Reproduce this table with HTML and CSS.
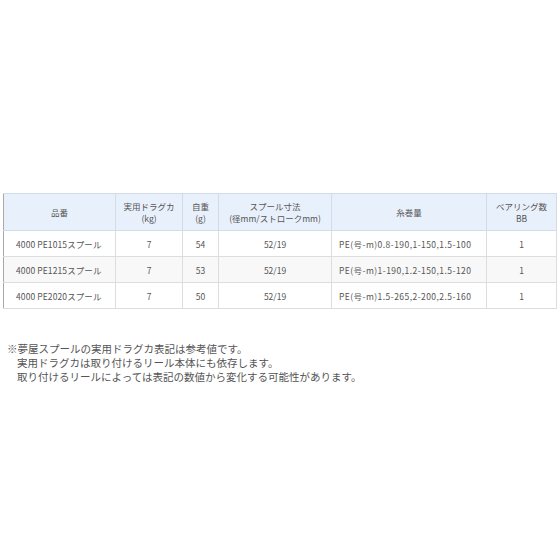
FILE: index.html
```html
<!DOCTYPE html>
<html lang="ja">
<head>
<meta charset="utf-8">
<link rel="stylesheet" href="styles.css">
</head>
<body>
<div class="page">
  <table class="spec">
    <colgroup>
      <col class="c1"><col class="c2"><col class="c3"><col class="c4"><col class="c5"><col class="c6">
    </colgroup>
    <thead>
      <tr>
        <th>品番</th>
        <th>実用ドラグカ<br>(kg)</th>
        <th>自重<br>(g)</th>
        <th>スプール寸法<br>(径mm/ストロークmm)</th>
        <th>糸巻量</th>
        <th>ベアリング数<br>BB</th>
      </tr>
    </thead>
    <tbody>
      <tr>
        <td class="left">4000 PE1015スプール</td>
        <td>7</td>
        <td>54</td>
        <td>52/19</td>
        <td class="line">PE(号-m)0.8-190,1-150,1.5-100</td>
        <td>1</td>
      </tr>
      <tr class="alt">
        <td class="left">4000 PE1215スプール</td>
        <td>7</td>
        <td>53</td>
        <td>52/19</td>
        <td class="line">PE(号-m)1-190,1.2-150,1.5-120</td>
        <td>1</td>
      </tr>
      <tr>
        <td class="left">4000 PE2020スプール</td>
        <td>7</td>
        <td>50</td>
        <td>52/19</td>
        <td class="line">PE(号-m)1.5-265,2-200,2.5-160</td>
        <td>1</td>
      </tr>
    </tbody>
  </table>
  <div class="note">
    <p>※夢屋スプールの実用ドラグカ表記は参考値です。</p>
    <p class="indent">実用ドラグカは取り付けるリール本体にも依存します。</p>
    <p class="indent">取り付けるリールによっては表記の数値から変化する可能性があります。</p>
  </div>
</div>
</body>
</html>
```

FILE: styles.css
```css
html, body {
  margin: 0;
  padding: 0;
  background: #ffffff;
}
.page {
  width: 560px;
  height: 560px;
  padding-top: 193px;
  box-sizing: border-box;
  font-family: "Noto Sans CJK JP", "Noto Sans", sans-serif;
  color: #555555;
}
.spec {
  margin-left: 3px;
  width: 553px;
  border-collapse: collapse;
  table-layout: fixed;
  font-size: 8.5px;
}
.c1 { width: 112px; }
.c2 { width: 67px; }
.c3 { width: 36px; }
.c4 { width: 113px; }
.c5 { width: 155px; }
.c6 { width: 70px; }
.spec th, .spec td {
  border: 1px solid #dddddd;
  text-align: center;
  padding: 0;
  font-weight: normal;
}
.spec th {
  background: #e8f0fb;
  border-color: #d3dbe6;
  height: 36px;
  line-height: 12px;
}
.spec td {
  height: 25px;
  line-height: 12px;
}
.spec tr > :first-child {
  border-left: 1px solid #a9a9a9;
}
.spec td.left {
  text-align: left;
  padding-left: 12px;
  letter-spacing: 0.1px;
}
.spec td.line {
  text-align: left;
  padding-left: 7px;
  letter-spacing: 0.45px;
}
.spec tr.alt td {
  background: #f8f8f8;
}
.note {
  margin-top: 33px;
  padding-left: 7px;
  font-size: 10.5px;
  line-height: 14px;
  color: #555555;
}
.note p {
  margin: 0;
}
.note .indent {
  padding-left: 10px;
}
```
